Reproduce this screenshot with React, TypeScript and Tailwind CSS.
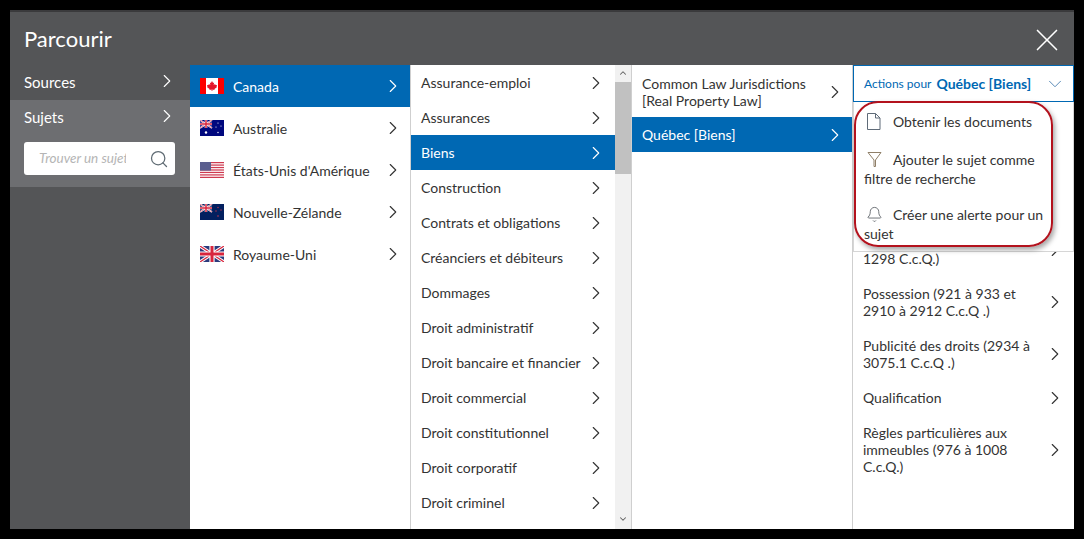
import React from "react"
import { ChevronRight, ChevronDown, ChevronUp, Search, X, Bell } from "lucide-react"
import clsx from "clsx"

const countries = ["Canada", "Australie", "États-Unis d'Amérique", "Nouvelle-Zélande", "Royaume-Uni"]

const subjects = [
  "Assurance-emploi",
  "Assurances",
  "Biens",
  "Construction",
  "Contrats et obligations",
  "Créanciers et débiteurs",
  "Dommages",
  "Droit administratif",
  "Droit bancaire et financier",
  "Droit commercial",
  "Droit constitutionnel",
  "Droit corporatif",
  "Droit criminel",
]

const Chevron = ({ className }: { className?: string }) => (
  <ChevronRight size={22} strokeWidth={1.2} className={clsx("shrink-0", className)} />
)

const UnionJack = () => (
  <>
    <path d="M0 0L12 8M12 0L0 8" stroke="#fff" strokeWidth="1.6" />
    <path d="M0 0L12 8M12 0L0 8" stroke="#d8243c" strokeWidth="0.6" />
    <path d="M6 0V8M0 4H12" stroke="#fff" strokeWidth="2.6" />
    <path d="M6 0V8M0 4H12" stroke="#d8243c" strokeWidth="1.5" />
  </>
)

const Flag = ({ name }: { name: string }) => {
  if (name === "Canada")
    return (
      <svg width="24" height="16" viewBox="0 0 24 16" className="shrink-0">
        <rect width="24" height="16" fill="#fff" />
        <rect width="6" height="16" fill="#fe0000" />
        <rect x="18" width="6" height="16" fill="#fe0000" />
        <path d="M12 3l1.1 2 1-.5-.4 2.6 1.4-1 .4 1 1.5-.2-.5 1.6.6.4-2.6 2-.1 1-2-.3V13h-.8v-1.4l-2 .3-.1-1-2.6-2 .6-.4-.5-1.6 1.5.2.4-1 1.4 1-.4-2.6 1 .5z" fill="#e4172b" />
      </svg>
    )
  if (name === "États-Unis d'Amérique")
    return (
      <svg width="24" height="16" viewBox="0 0 24 16" className="shrink-0">
        <rect width="24" height="16" fill="#fff" />
        {[0, 2.46, 4.92, 7.38, 9.84, 12.3, 14.76].map((y) => (
          <rect key={y} y={y} width="24" height="1.23" fill="#cf3a50" />
        ))}
        <rect width="11" height="8.6" fill="#5b5f8f" />
      </svg>
    )
  if (name === "Royaume-Uni")
    return (
      <svg width="24" height="16" viewBox="0 0 24 16" className="shrink-0">
        <rect width="24" height="16" fill="#2b3a7c" />
        <g transform="scale(2)">
          <UnionJack />
        </g>
      </svg>
    )
  const isAu = name === "Australie"
  return (
    <svg width="24" height="16" viewBox="0 0 24 16" className="shrink-0">
      <rect width="24" height="16" fill={isAu ? "#00087e" : "#03205f"} />
      <UnionJack />
      {isAu ? (
        <g fill="#fff">
          <circle cx="6" cy="12.5" r="1.2" />
          <circle cx="18" cy="3" r="0.6" />
          <circle cx="21" cy="6" r="0.6" />
          <circle cx="16" cy="7" r="0.6" />
          <circle cx="18" cy="12.5" r="0.7" />
        </g>
      ) : (
        <g fill="#c8344c">
          <circle cx="18" cy="3.5" r="0.7" />
          <circle cx="21" cy="6" r="0.7" />
          <circle cx="16" cy="7" r="0.7" />
          <circle cx="18" cy="12" r="0.8" />
        </g>
      )}
    </svg>
  )
}

const App = () => {
  return (
    <div className="h-[539px] w-[1084px] bg-black p-[10px] font-['Lato','Open_Sans',sans-serif] text-[14px] leading-[17px] text-[#333] overflow-hidden">
      <div className="relative flex h-[519px] w-[1064px] flex-col overflow-hidden border-t-2 border-[#3a3a3c] bg-[#545557]">
        <div className="flex h-[53px] shrink-0 items-center justify-between pl-[14px] pr-[8px]">
          <h1 className="text-[22px] leading-[28px] text-white mt-[1px]">Parcourir</h1>
          <X size={38} strokeWidth={1.05} className="text-white mt-[2px]" />
        </div>

        <div className="flex min-h-0 flex-1">
          {/* sidebar */}
          <div className="w-[180px] shrink-0 text-[15px] text-white">
            <div className="flex h-[35px] items-center justify-between pl-[14px] pr-[12px]">
              <span>Sources</span>
              <Chevron className="mt-[-3px]" />
            </div>
            <div className="h-[87px] bg-[#6d6e71] pl-[14px] pr-[15px]">
              <div className="flex h-[35px] items-center justify-between">
                <span>Sujets</span>
                <Chevron className="mt-[-3px] mr-[-3px]" />
              </div>
              <div className="mt-[7px] flex h-[33px] items-center rounded-[3px] bg-white pl-[15px] pr-[6px]">
                <span className="w-[87px] overflow-hidden whitespace-nowrap text-[13.5px] italic text-[#b5b5b5]">Trouver un sujet</span>
                <Search size={20} strokeWidth={1.5} className="ml-auto text-[#5f6b73]" />
              </div>
            </div>
          </div>

          {/* pays */}
          <div className="w-[221px] shrink-0 border-r border-[#cfcfcf] bg-white">
            {countries.map((c, i) => (
              <div
                key={c}
                className={clsx(
                  "flex h-[42px] items-center pl-[10px] pr-[6px]",
                  i === 0 && "bg-[#0068b3] text-white"
                )}
              >
                <Flag name={c} />
                <span className="ml-[9px] flex-1">{c}</span>
                <Chevron />
              </div>
            ))}
          </div>

          {/* sujets */}
          <div className="flex w-[221px] shrink-0 border-r border-[#cfcfcf] bg-white">
            <div className="w-[204px] shrink-0 overflow-hidden">
              {subjects.map((s) => (
                <div
                  key={s}
                  className={clsx(
                    "flex h-[35px] items-center justify-between pl-[10px] pr-[8px]",
                    s === "Biens" && "bg-[#0068b3] text-white"
                  )}
                >
                  <span>{s}</span>
                  <Chevron />
                </div>
              ))}
            </div>
            <div className="relative w-[16px] bg-[#f1f1f1]">
              <ChevronUp size={10} strokeWidth={2.5} className="absolute left-[3px] top-[3px] text-[#606060]" />
              <div className="mt-[17px] h-[92px] bg-[#c1c1c1]" />
              <ChevronDown size={10} strokeWidth={2.5} className="absolute left-[3px] bottom-[5px] text-[#606060]" />
            </div>
          </div>

          {/* sous-sujets */}
          <div className="w-[221px] shrink-0 border-r border-[#cfcfcf] bg-white pt-[1px]">
            <div className="flex h-[51px] items-center justify-between pl-[10px] pr-[6px]">
              <span>
                Common Law Jurisdictions
                <br />
                [Real Property Law]
              </span>
              <Chevron />
            </div>
            <div className="flex h-[35px] items-center justify-between bg-[#0068b3] pl-[10px] pr-[6px] text-white">
              <span>Québec [Biens]</span>
              <Chevron />
            </div>
          </div>

          {/* actions */}
          <div className="relative min-w-0 flex-1 bg-white">
            <div className="pt-[159px]">
              <div className="flex h-[52px] items-center justify-between pl-[10px] pr-[8px]">
                <span className="pt-[17px]">1298 C.c.Q.)</span>
                <Chevron />
              </div>
              <div className="flex h-[52px] items-center justify-between pl-[10px] pr-[8px]">
                <span>
                  Possession (921 à 933 et
                  <br />
                  2910 à 2912 C.c.Q .)
                </span>
                <Chevron />
              </div>
              <div className="flex h-[52px] items-center justify-between pl-[10px] pr-[8px]">
                <span>
                  Publicité des droits (2934 à
                  <br />
                  3075.1 C.c.Q .)
                </span>
                <Chevron />
              </div>
              <div className="flex h-[35px] items-center justify-between pl-[10px] pr-[8px]">
                <span>Qualification</span>
                <Chevron />
              </div>
              <div className="flex h-[69px] items-center justify-between pl-[10px] pr-[8px]">
                <span>
                  Règles particulières aux
                  <br />
                  immeubles (976 à 1008
                  <br />
                  C.c.Q.)
                </span>
                <Chevron />
              </div>
            </div>

            <div className="absolute left-0 right-0 top-0 border-b border-[#d6d6d6] bg-white">
              <div className="flex h-[37px] items-center border border-[#0068b3] pl-[10px] pr-[7px] text-[#0068b3]">
                <span className="text-[12px]">Actions pour</span>
                <span className="ml-[5px] font-bold">Québec [Biens]</span>
                <ChevronDown size={22} strokeWidth={1} className="ml-auto text-[#4a80b0]" />
              </div>
              <div className="border-x border-[#d6d6d6] pl-[10px] pr-[8px] pb-[8px]">
                <div className="flex h-[39px] items-center">
                  <svg width="15" height="17" viewBox="0 0 15 17" className="ml-[2px] mr-[12px] shrink-0">
                    <path d="M1.5 .5H9.5L14 5V16.5H1.5ZM9.5 .5V5H14" fill="none" stroke="#5f6b78" strokeWidth="1" />
                  </svg>
                  <span>Obtenir les documents</span>
                </div>
                <div className="pt-[9px]">
                  <svg width="17" height="17" viewBox="0 0 17 17" className="ml-[2px] mr-[10px] inline-block align-[-3px]">
                    <path d="M2 1.5h13L9.5 9v6.5L8 15.5V9z" fill="none" stroke="#8f7f68" strokeWidth="1" />
                  </svg>
                  <span className="leading-[19px]">Ajouter le sujet comme filtre de recherche</span>
                </div>
                <div className="mt-[17px]">
                  <Bell size={17} strokeWidth={1.1} className="ml-[2px] mr-[10px] inline-block align-[-3px] text-[#4a4f55]" />
                  <span className="leading-[19px]">Créer une alerte pour un sujet</span>
                </div>
              </div>
            </div>

            {/* annotation */}
            <div className="pointer-events-none absolute left-[1px] top-[36px] h-[146px] w-[199px] rounded-[24px] border-2 border-[#b3121d] shadow-[2px_3px_5px_rgba(0,0,0,0.35)]" />
          </div>
        </div>
      </div>
    </div>
  )
}

export default App
